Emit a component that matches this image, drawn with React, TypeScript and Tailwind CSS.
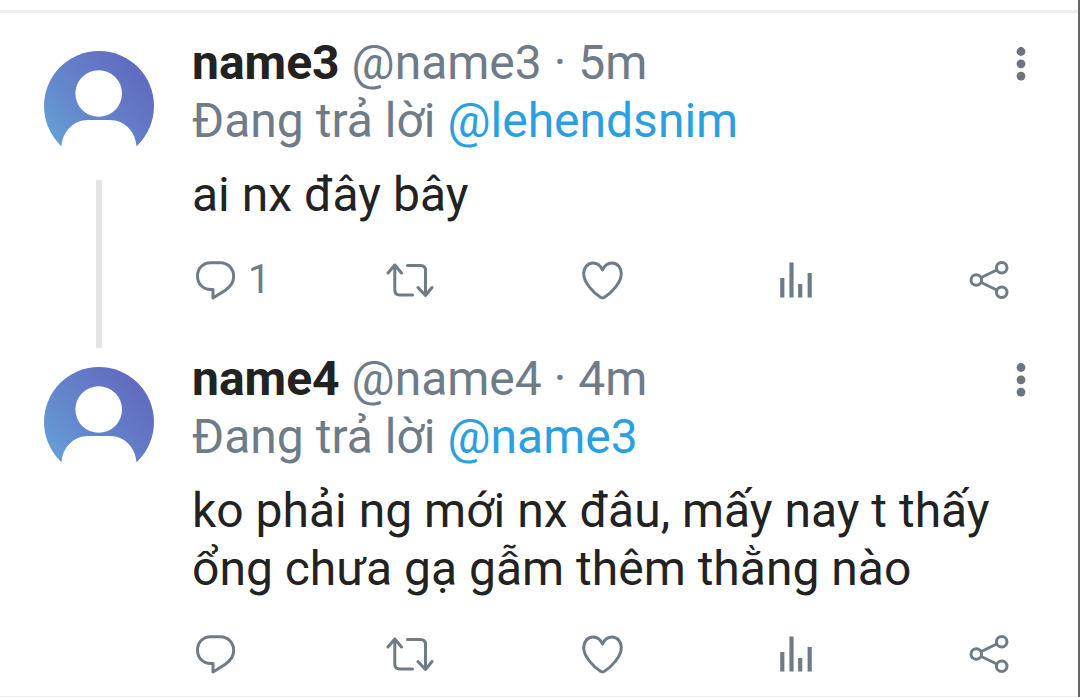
import type { ReactNode } from "react";

type Tweet = {
  name: string;
  handle: string;
  time: string;
  replyTo: string;
  text: string;
  replies?: number;
  threaded?: boolean;
};

const tweets: Tweet[] = [
  { name: "name3", handle: "@name3", time: "5m", replyTo: "@lehendsnim", text: "ai nx đây bây", replies: 1, threaded: true },
  { name: "name4", handle: "@name4", time: "4m", replyTo: "@name3", text: "ko phải ng mới nx đâu, mấy nay t thấy ổng chưa gạ gẫm thêm thằng nào" },
];

function Avatar({ id }: { id: string }) {
  return (
    <svg viewBox="0 0 110 110" className="size-[110px] shrink-0" aria-hidden="true">
      <defs>
        <linearGradient id={id} x1="0" y1="0.9" x2="0.85" y2="0.2">
          <stop offset="0" stopColor="#66a6db" />
          <stop offset="0.4" stopColor="#648acd" />
          <stop offset="1" stopColor="#626cc0" />
        </linearGradient>
      </defs>
      <circle cx="55" cy="55" r="55" fill={`url(#${id})`} />
      <circle cx="54.7" cy="42.5" r="23.3" fill="#fff" />
      <path d="M17.500 95.500C18.500 80 30 69 44 69H66C80 69 91.500 80 92.500 95.500H110V110H0V95.500Z" fill="#fff" />
    </svg>
  );
}

function Icon({ children }: { children: ReactNode }) {
  return (
    <svg
      viewBox="0 0 48 48"
      className="size-12 shrink-0"
      fill="none"
      stroke="currentColor"
      strokeWidth="3"
      strokeLinecap="round"
      strokeLinejoin="round"
      aria-hidden="true"
    >
      {children}
    </svg>
  );
}

function Action({ label, children }: { label: string; children: ReactNode }) {
  return (
    <button type="button" aria-label={label} className="flex items-center gap-2 justify-self-start">
      {children}
    </button>
  );
}

function TweetRow({ tweet }: { tweet: Tweet }) {
  return (
    <article className={tweet.threaded ? "flex gap-[38px] pl-11 pr-[33px]" : "flex gap-[38px] border-b border-[#eeeeee] pl-11 pr-[33px]"}>
      <div className="flex w-[110px] shrink-0 flex-col items-center pt-[17px]">
        <Avatar id={`avatar-${tweet.name}`} />
        {tweet.threaded && <div className="mt-[19px] mb-[2px] w-[6px] flex-1 bg-[#e3e3e3]" />}
      </div>
      <div className={tweet.threaded ? "min-w-0 flex-1 pb-[46px]" : "min-w-0 flex-1 pb-[18px]"}>
        <header className="flex items-center justify-between">
          <p>
            <span className="font-bold text-[#222222]">{tweet.name}</span> {tweet.handle} · {tweet.time}
          </p>
          <button type="button" aria-label="More" className="text-[#6b7581]">
            <Icon>
              <g fill="currentColor" stroke="none">
                <circle cx="24" cy="12.500" r="4.4" />
                <circle cx="24" cy="24.800" r="4.4" />
                <circle cx="24" cy="37.100" r="4.4" />
              </g>
            </Icon>
          </button>
        </header>
        <p>
          Đang trả lời <a href="#profile" className="text-[#2b9fe0]">{tweet.replyTo}</a>
        </p>
        <p className="mt-4 text-[#222222]">{tweet.text}</p>
        <footer className="mt-8 mr-[31px] grid grid-cols-[1fr_1fr_1fr_1fr_48px] text-[40px] leading-[48px]">
          <Action label="Reply">
            <Icon>
              <path d="M18.500 6.700H28.500C36 6.700 41.700 13 41.700 20.500C41.700 26.500 38 31 33 34.500L21 42V33.500H19C11 33.500 5.500 28 5.500 20C5.500 12.500 11 6.700 18.500 6.700Z" />
            </Icon>
            {tweet.replies && <span>{tweet.replies}</span>}
          </Action>
          <Action label="Retweet">
            <Icon>
              <path d="M2 17L8.800 9L15.500 17M8.800 9V34Q8.800 39 13.800 39H26.500M21.500 9.500H34.500Q39.500 9.500 39.500 14.500V39M32 31.500L39.500 39.500L46 31.500" />
            </Icon>
          </Action>
          <Action label="Like">
            <Icon>
              <path d="M23.500 14C21.500 9.500 17.800 7 14 7C8.300 7 4.700 12 4.700 17.500C4.700 27 15 37 21.500 41.300Q23.500 42.500 25.500 41.300C32 37 42.300 27 42.300 17.500C42.300 12 38.700 7 33 7C29.200 7 25.500 9.500 23.500 14Z" />
            </Icon>
          </Action>
          <Action label="Analytics">
            <Icon>
              <path d="M9.300 22V41.500M18.500 6.500V41.500M27.200 28V41.500M36.700 17V41.500" strokeWidth="4.200" strokeLinecap="butt" />
            </Icon>
          </Action>
          <Action label="Share">
            <Icon>
              <circle cx="10.300" cy="24" r="5.300" />
              <circle cx="35.700" cy="11.700" r="5.300" />
              <circle cx="35.700" cy="36.300" r="5.300" />
              <path d="M15.300 21.500L30.700 14M15.300 26.500L30.700 34" />
            </Icon>
          </Action>
        </footer>
      </div>
    </article>
  );
}

export default function App() {
  return (
    <main className="min-h-screen border-r-2 border-[#666666] bg-white font-['Roboto',sans-serif] text-[48px] leading-[58px] text-[#6f7b87]">
      <div className="h-[13px] border-b-[3px] border-[#eeeeee]" />
      <div className="pt-[21px]">
        {tweets.map((tweet) => (
          <TweetRow key={tweet.name} tweet={tweet} />
        ))}
      </div>
    </main>
  );
}
